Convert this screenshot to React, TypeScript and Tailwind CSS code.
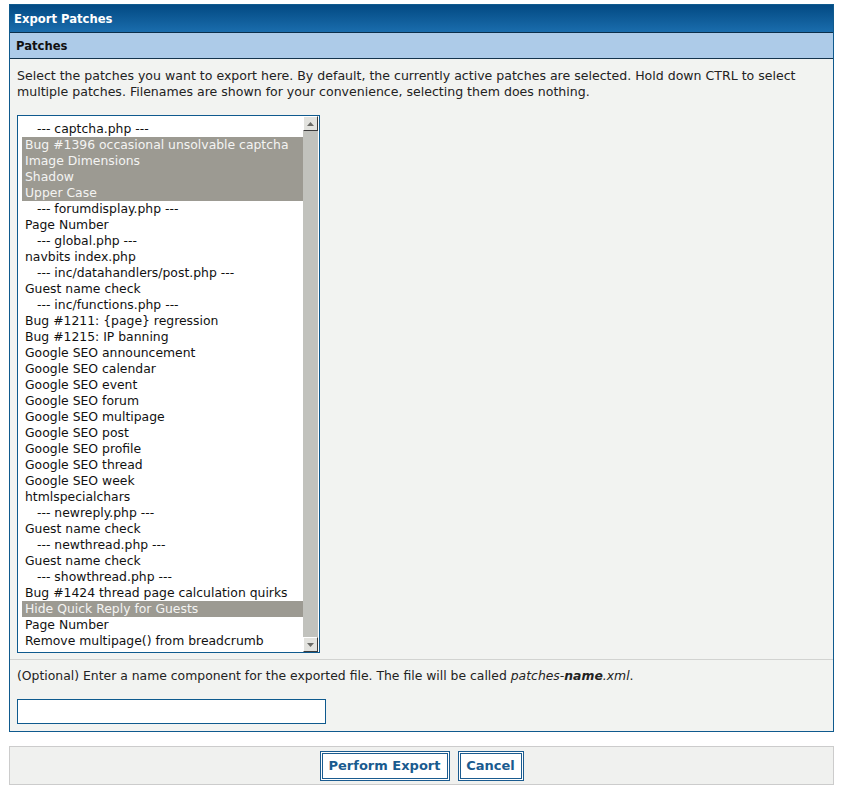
import React from "react";

type Item = { label: string; header?: boolean; selected?: boolean };

const items: Item[] = [
  { label: "--- captcha.php ---", header: true },
  { label: "Bug #1396 occasional unsolvable captcha", selected: true },
  { label: "Image Dimensions", selected: true },
  { label: "Shadow", selected: true },
  { label: "Upper Case", selected: true },
  { label: "--- forumdisplay.php ---", header: true },
  { label: "Page Number" },
  { label: "--- global.php ---", header: true },
  { label: "navbits index.php" },
  { label: "--- inc/datahandlers/post.php ---", header: true },
  { label: "Guest name check" },
  { label: "--- inc/functions.php ---", header: true },
  { label: "Bug #1211: {page} regression" },
  { label: "Bug #1215: IP banning" },
  { label: "Google SEO announcement" },
  { label: "Google SEO calendar" },
  { label: "Google SEO event" },
  { label: "Google SEO forum" },
  { label: "Google SEO multipage" },
  { label: "Google SEO post" },
  { label: "Google SEO profile" },
  { label: "Google SEO thread" },
  { label: "Google SEO week" },
  { label: "htmlspecialchars" },
  { label: "--- newreply.php ---", header: true },
  { label: "Guest name check" },
  { label: "--- newthread.php ---", header: true },
  { label: "Guest name check" },
  { label: "--- showthread.php ---", header: true },
  { label: "Bug #1424 thread page calculation quirks" },
  { label: "Hide Quick Reply for Guests", selected: true },
  { label: "Page Number" },
  { label: "Remove multipage() from breadcrumb" },
];

function ScrollButton({ up }: { up?: boolean }) {
  return (
    <div className="h-[15px] w-[15px] flex items-center justify-center bg-[#e2e2de] border-t border-l border-t-white border-l-white border-r border-b border-r-[#3c3c3c] border-b-[#3c3c3c]">
      <svg width="7" height="4" viewBox="0 0 7 4">
        {up ? <polygon points="3.5,0 7,4 0,4" fill="#6a6a66" /> : <polygon points="0,0 7,0 3.5,4" fill="#6a6a66" />}
      </svg>
    </div>
  );
}

export default function App() {
  return (
    <div className="pt-1 pl-[9px] pr-[10px] pb-2 bg-white text-[12.4px] text-[#222] font-['DejaVu_Sans',Verdana,sans-serif]">
      <div className="border border-[#0f5a8e] bg-[#f2f3f1]">
        <div className="h-[28px] flex items-center px-[4px] pt-[3px] bg-gradient-to-b from-[#034a83] to-[#1a6dad] border-b border-[#0b2f4a] text-white font-bold text-[11.6px]">
          Export Patches
        </div>
        <div className="h-[26px] flex items-center px-[6px] pt-[2px] bg-[#adcbe8] border-b border-[#15344c] font-bold text-[11.6px] text-[#111]">
          Patches
        </div>

        <div className="px-[7px] pt-[9px] pb-[6px]">
          <p className="leading-[16px] text-[12.55px] text-[#222]">
            Select the patches you want to export here. By default, the currently active patches are selected. Hold down CTRL to select
            <br />
            multiple patches. Filenames are shown for your convenience, selecting them does nothing.
          </p>

          <div className="mt-[15px] w-[303px] h-[538px] border border-[#0f5a8e] bg-white flex">
            <div className="flex-1 overflow-hidden pl-[4px] pt-[5px]">
              {items.map((it, i) => (
                <div
                  key={i}
                  className={`h-[16px] leading-[16px] whitespace-nowrap pl-[3px] ${
                    it.selected ? "bg-[#9c9a92] text-[#f4f4f2]" : "text-[#111]"
                  } ${it.header ? "pl-[15px]" : ""}`}
                >
                  {it.label}
                </div>
              ))}
            </div>
            <div className="w-[16px] flex flex-col bg-[#c1c2bd] border-r border-white">
              <ScrollButton up />
              <div className="flex-1" />
              <ScrollButton />
            </div>
          </div>
        </div>

        <div className="border-t border-[#d2d3d1] px-[7px] pt-[8px] pb-[7px]">
          <p className="leading-[16px] text-[#222]">
            (Optional) Enter a name component for the exported file. The file will be called{" "}
            <i>
              patches-<b>name</b>.xml
            </i>
            .
          </p>
          <input type="text" className="mt-[15px] block w-[309px] h-[25px] border border-[#0f5a8e] bg-white outline-none px-1" />
        </div>
      </div>

      <div className="mt-[14px] h-[39px] border border-[#cccccc] bg-[#f0f1ef] flex items-center justify-center gap-[8px]">
        <button className="h-[30px] w-[130px] border-[3px] border-double border-[#1a5b8f] bg-white text-[#1a5b8f] font-bold text-[13px]">
          Perform Export
        </button>
        <button className="h-[30px] w-[66px] border-[3px] border-double border-[#1a5b8f] bg-white text-[#1a5b8f] font-bold text-[13px]">
          Cancel
        </button>
      </div>
    </div>
  );
}
